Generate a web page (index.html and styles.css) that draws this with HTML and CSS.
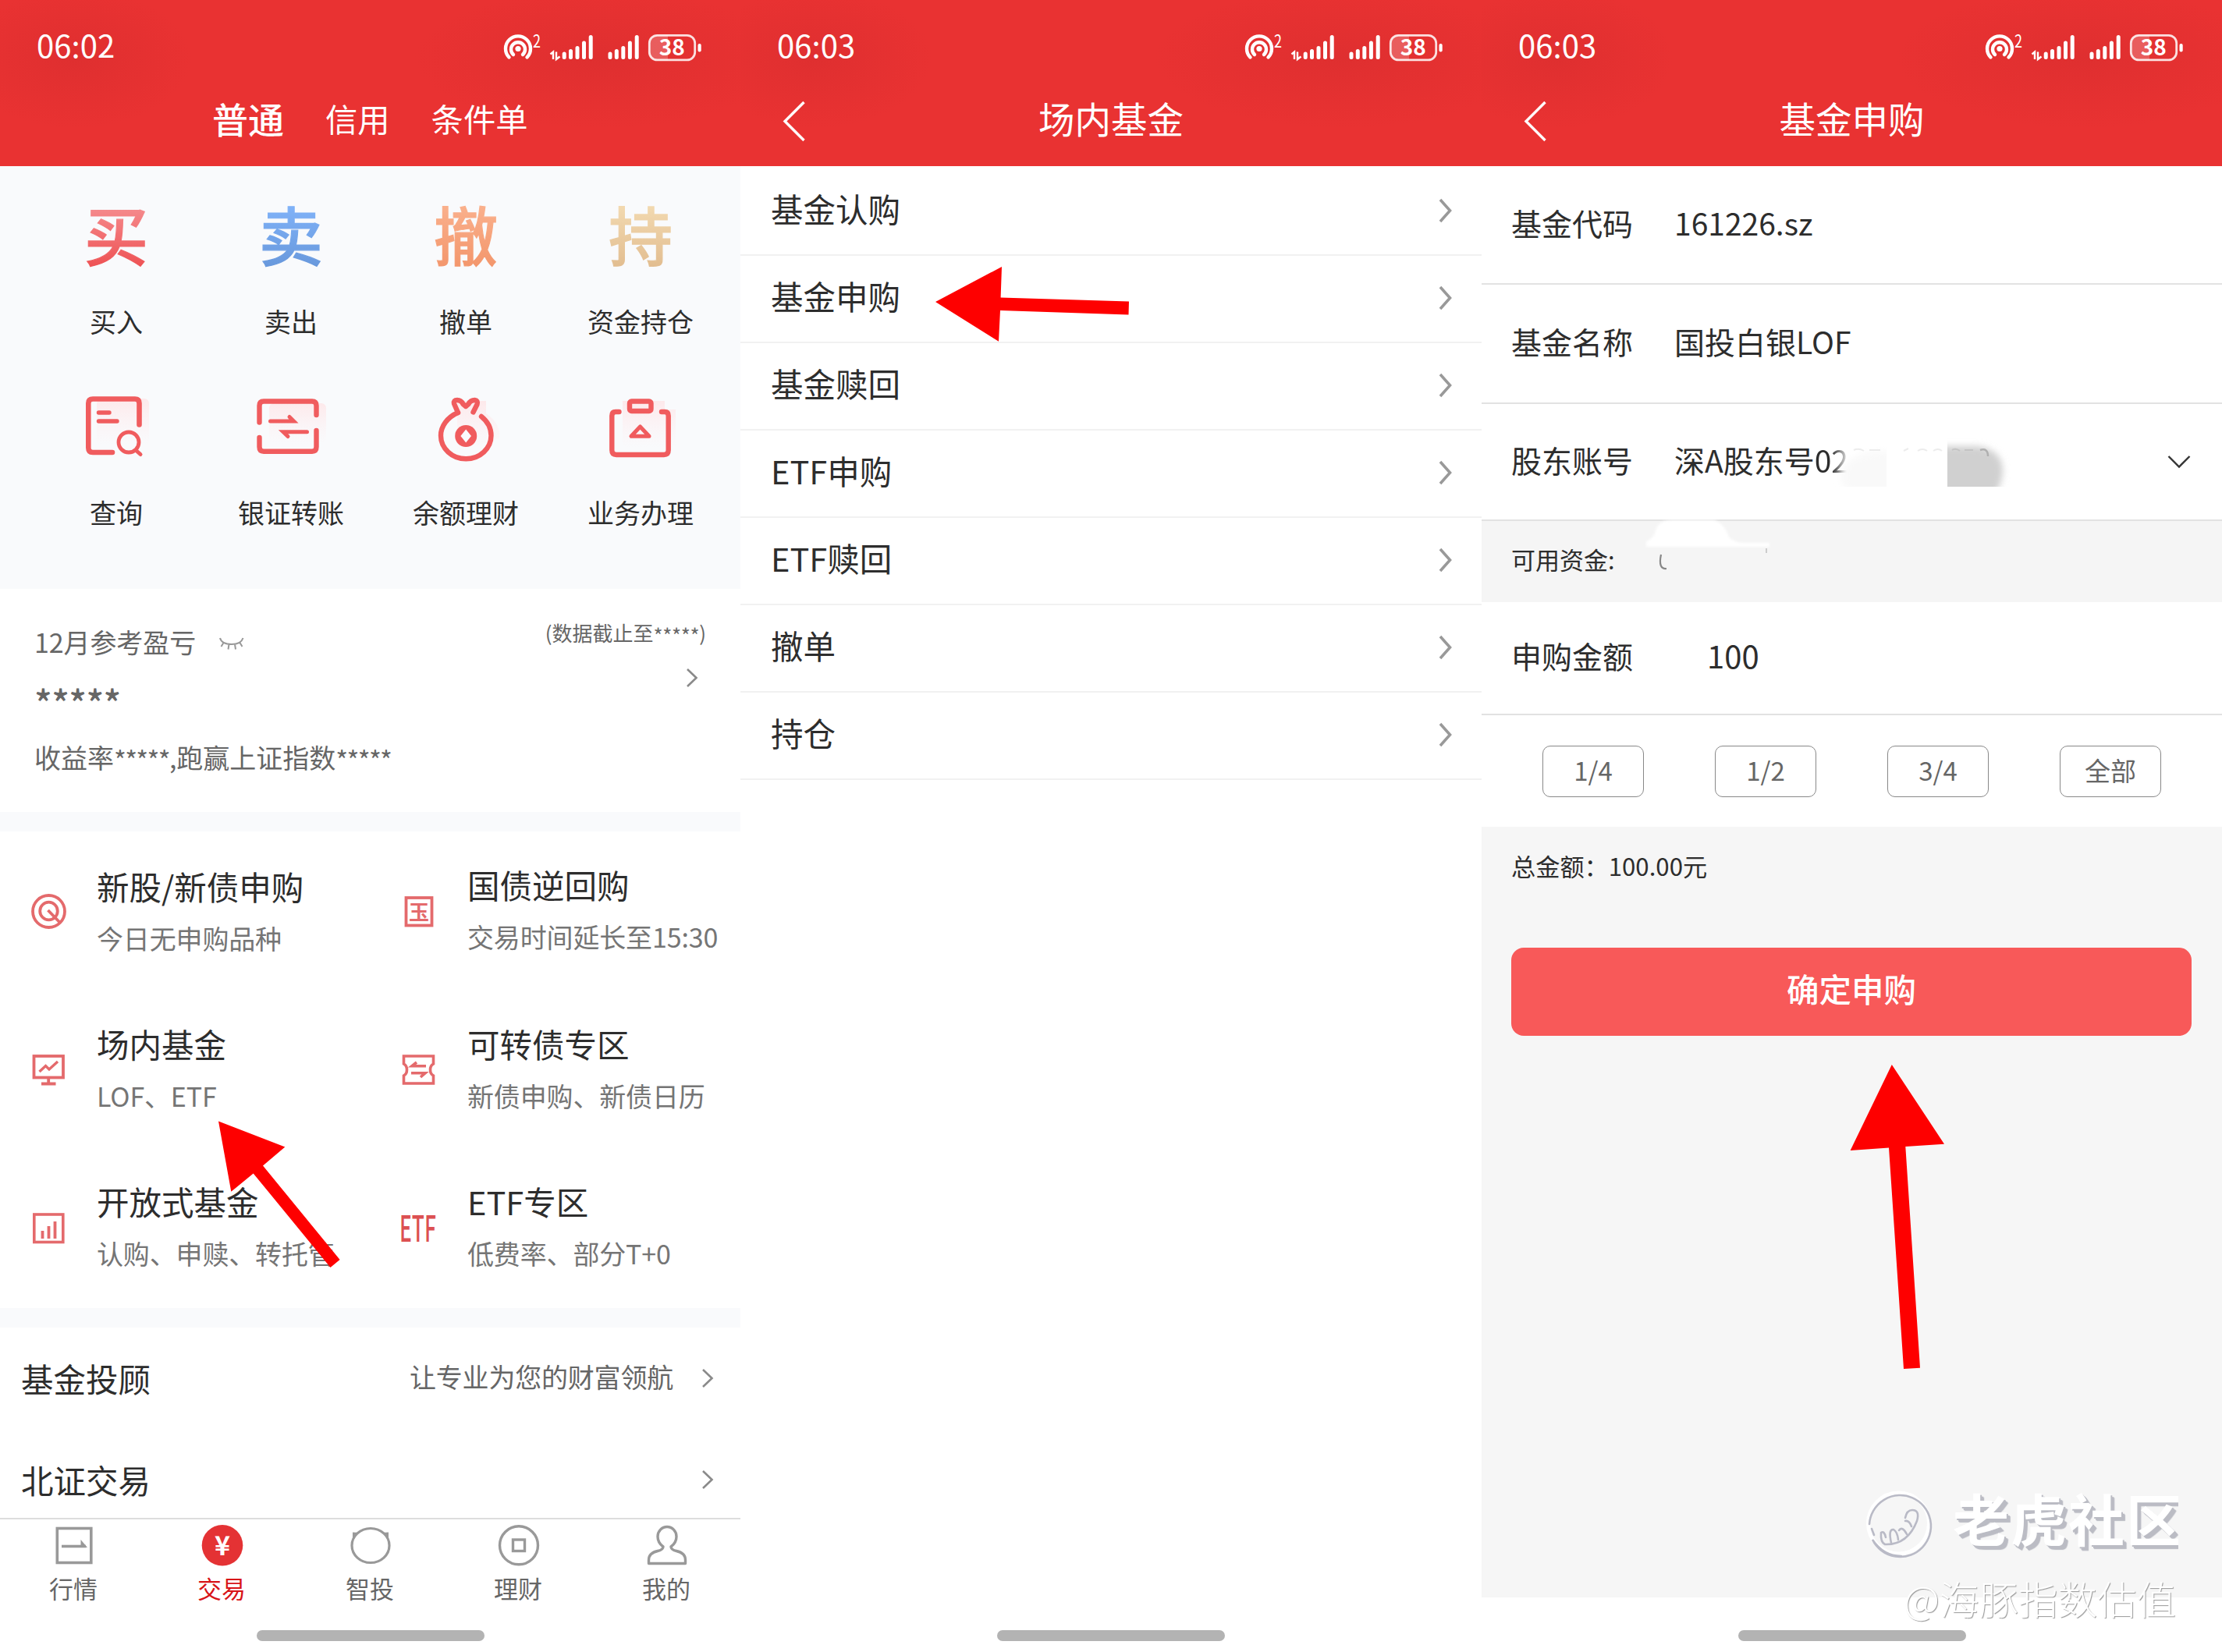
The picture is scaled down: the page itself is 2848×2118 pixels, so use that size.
FILE: index.html
```html
<!DOCTYPE html>
<html lang="zh-CN">
<head>
<meta charset="utf-8">
<title>场内基金申购</title>
<link rel="stylesheet" href="styles.css">
</head>
<body>
<svg class="defs" width="0" height="0">
  <symbol id="status" viewBox="640 30 270 60" overflow="visible">
    <g fill="none" stroke="#fff" stroke-width="4.4" stroke-linecap="round">
      <path d="M652.500 73.500A16 16 0 1 1 675.500 73.500"/>
      <path d="M658 70A9 9 0 1 1 670 70"/>
    </g>
    <circle cx="664" cy="62.500" r="3.600" fill="#fff"/>
    <text class="st-sup" x="683" y="61" textLength="10" lengthAdjust="spacingAndGlyphs">2</text>
    <path d="M705.500 69.500L709 66.500V76M713 66.500V76L717.500 72.500" fill="none" stroke="#fff" stroke-width="2.400"/>
    <g stroke="#fff" stroke-width="5" stroke-linecap="round">
      <path d="M723.200 69V73.500M731.500 65.500V73.500M740 61.500V73.500M748.500 55V73.500M757.200 47.500V73.500"/>
      <path d="M782 69V73.500M790.300 65.500V73.500M798.800 61.500V73.500M807.400 55V73.500M816.200 47.500V73.500"/>
    </g>
    <path d="M843 45H856V77.500H843A11 11 0 0 1 832 66.500V56A11 11 0 0 1 843 45Z" fill="#fff" opacity=".22"/>
    <rect x="832.300" y="45.300" width="58.400" height="31.600" rx="10" fill="none" stroke="#fff" stroke-opacity=".85" stroke-width="2.800"/>
    <rect x="894.500" y="56" width="4.200" height="10.500" rx="2" fill="#fff"/>
    <text class="st-bat" x="861.300" y="71.300" text-anchor="middle">38</text>
  </symbol>
  <symbol id="back" viewBox="0 0 40 60"><path d="M32.500 6L8 30.500L32.500 55" fill="none" stroke="#fff" stroke-width="3.400"/></symbol>
  <symbol id="go" viewBox="0 0 20 34"><path d="M3 3L15.500 17L3 31" fill="none" stroke="#999" stroke-width="3.600"/></symbol>
  <symbol id="go-s" viewBox="0 0 18 26"><path d="M3 2L14.500 13L3 24" fill="none" stroke="#8a8a8a" stroke-width="2.600"/></symbol>
  <linearGradient id="tint" x1="0" y1="0" x2="0" y2="1"><stop offset="0" stop-color="#fde9eb"/><stop offset="1" stop-color="#fdf1f3" stop-opacity="0"/></linearGradient>
</svg>

<main class="stage">
  <section class="phone">
    <header class="head">
      <div class="status"><span class="time">06:02</span><svg class="status-icons"><use href="#status"/></svg></div>
      <nav class="head-tabs"><b>普通</b><span>信用</span><span>条件单</span></nav>
    </header>

    <div class="shortcuts">
      <div class="cut"><span class="glyph g-red">买</span><span class="cut-label">买入</span></div>
      <div class="cut"><span class="glyph g-blue">卖</span><span class="cut-label">卖出</span></div>
      <div class="cut"><span class="glyph g-orange">撤</span><span class="cut-label">撤单</span></div>
      <div class="cut"><span class="glyph g-gold">持</span><span class="cut-label">资金持仓</span></div>
      <div class="cut">
        <svg class="cut-icon" viewBox="104 500 90 100">
          <rect x="124" y="511" width="67" height="60" rx="6" fill="url(#tint)"/>
          <g fill="none" stroke="#f05c5e" stroke-linecap="round">
            <path d="M178.500 544.500V517Q178.500 511.500 173 511.500H119Q113.300 511.500 113.300 517V574Q113.300 580 119 580H144" stroke-width="6.600"/>
            <path d="M126.500 529H140M126.500 540H150" stroke-width="5.400"/>
            <circle cx="165" cy="567" r="13" stroke-width="4.800"/><path d="M175 578L180 582.500" stroke-width="5"/>
          </g>
        </svg><span class="cut-label">查询</span></div>
      <div class="cut">
        <svg class="cut-icon" viewBox="328 500 90 100">
          <rect x="345" y="517" width="73" height="52" rx="6" fill="url(#tint)"/>
          <g fill="none" stroke="#f05c5e" stroke-width="6.400" stroke-linecap="round">
            <path d="M332.500 541.500V520Q332.500 514.500 338 514.500H400Q405.500 514.500 405.500 520V532"/>
            <path d="M332.500 561V573Q332.500 578.700 338 578.700H400Q405.500 578.700 405.500 573V552"/>
            <path d="M346.500 540H376.500L371 534.500M393.500 553.700H363L369 559.500" stroke-width="5"/>
          </g>
        </svg><span class="cut-label">银证转账</span></div>
      <div class="cut">
        <svg class="cut-icon" viewBox="552 500 90 100">
          <path d="M586 514H623V530Q642 543 640 562L586 580Z" fill="url(#tint)"/>
          <g fill="none" stroke="#f05c5e" stroke-width="6.400" stroke-linecap="round" stroke-linejoin="round">
            <path d="M587 529C573 535 565 547 565 558.500A32 29.500 0 0 0 629.500 558.500C629.500 549 624.500 540 617 534"/>
            <path d="M587 529L582 517.500Q581 513 586 513Q591 513 593.500 518L597 521L600.500 518Q603 513 608.500 513Q613 513.500 611.500 518.500L606.500 528.500"/>
          </g>
          <circle cx="597.200" cy="559" r="14" fill="#f05c5e"/><path d="M597.200 550.500L604 559L597.200 567.500L590.400 559Z" fill="#fafbfd"/>
        </svg><span class="cut-label">余额理财</span></div>
      <div class="cut">
        <svg class="cut-icon" viewBox="776 500 90 100">
          <path d="M798 514H852V525H866V574H798Z" fill="url(#tint)"/>
          <g fill="none" stroke="#f05c5e" stroke-width="6.400" stroke-linecap="round" stroke-linejoin="round">
            <path d="M793.500 528H789Q784.300 528 784.300 533V577Q784.300 583 790 583H851Q856.700 583 856.700 577V533Q856.700 528 852 528H848"/>
            <rect x="807" y="514.500" width="27.500" height="12.500" rx="2.500"/>
            <path d="M820.500 547L809 559.300H832Z" stroke-width="5"/>
          </g>
        </svg><span class="cut-label">业务办理</span></div>
    </div>

    <div class="profit">
      <div class="profit-main">
        <div class="profit-title">12月参考盈亏
          <svg class="lash" viewBox="278 814 38 22"><path d="M282 818Q284 826 297 826Q309 826 311.500 818M286.500 824L283.500 829M293.500 826L292.500 832.500M301 826L302 832.500M307.500 824L310.500 829" fill="none" stroke="#999" stroke-width="2"/></svg>
        </div>
        <div class="profit-value">*****</div>
        <div class="profit-rate">收益率<i class="mask">*****</i>,跑赢上证指数<i class="mask">*****</i></div>
      </div>
      <div class="profit-side">
        <span>(数据截止至<i class="mask mask--wide">*****</i>)</span>
        <svg class="profit-go"><use href="#go-s"/></svg>
      </div>
    </div>
    <div class="band"></div>

    <div class="entries">
      <div class="entry">
        <svg class="entry-icon" viewBox="38 1145 48 48"><g fill="none" stroke="#e46a6c" stroke-width="3.800"><circle cx="62.500" cy="1168.500" r="20.500"/><circle cx="62.500" cy="1168" r="11.300"/><path d="M61.500 1167L77 1183"/></g></svg>
        <div class="entry-text"><strong>新股/新债申购</strong><span>今日无申购品种</span></div></div>
      <div class="entry entry--raised">
        <svg class="entry-icon" viewBox="513 1143 48 48"><rect x="520.500" y="1151" width="33" height="35.500" fill="none" stroke="#e46a6c" stroke-width="3.800"/><text class="icon-jade" x="537" y="1178.500" text-anchor="middle">玉</text></svg>
        <div class="entry-text"><strong>国债逆回购</strong><span>交易时间延长至15:30</span></div></div>
      <div class="entry">
        <svg class="entry-icon" viewBox="38 1347 48 48"><g fill="none" stroke="#e46a6c" stroke-width="3.800"><rect x="43.500" y="1354" width="37.500" height="27.500"/><path d="M62.200 1381V1389M53 1389.500H71.500"/><path d="M50.500 1374L58.500 1366.500L63 1371L74 1361" stroke-width="3.400"/></g></svg>
        <div class="entry-text"><strong>场内基金</strong><span>LOF、ETF</span></div></div>
      <div class="entry">
        <svg class="entry-icon" viewBox="513 1347 48 48"><g fill="none" stroke="#e46a6c" stroke-width="3.600"><path d="M517.500 1354H555.500V1364Q551.500 1366 551.500 1371.500Q551.500 1377 555.500 1379V1389H517.500V1379Q521.500 1377 521.500 1371.500Q521.500 1366 517.500 1364Z"/><path d="M546 1366.800H528L534 1362M527 1375.800H545L539 1381"/></g></svg>
        <div class="entry-text"><strong>可转债专区</strong><span>新债申购、新债日历</span></div></div>
      <div class="entry">
        <svg class="entry-icon" viewBox="38 1549 48 48"><g fill="none" stroke="#e46a6c" stroke-width="3.600"><rect x="43.800" y="1557" width="37" height="35.500"/><path d="M54.500 1578V1588M62.500 1572V1588M70.500 1566V1588" stroke-width="3.800"/></g></svg>
        <div class="entry-text"><strong>开放式基金</strong><span>认购、申赎、转托管</span></div></div>
      <div class="entry">
        <svg class="entry-icon" viewBox="513 1549 48 48"><text class="icon-etf" x="512" y="1592" textLength="47" lengthAdjust="spacingAndGlyphs">ETF</text></svg>
        <div class="entry-text"><strong>ETF专区</strong><span>低费率、部分T+0</span></div></div>
    </div>
    <div class="band"></div>

    <div class="links">
      <div class="link"><strong>基金投顾</strong><span class="link-note">让专业为您的财富领航</span><svg class="link-go"><use href="#go-s"/></svg></div>
      <div class="link"><strong>北证交易</strong><span class="link-note"></span><svg class="link-go"><use href="#go-s"/></svg></div>
    </div>

    <nav class="tabbar">
      <div class="tab"><svg viewBox="65 1950 60 60"><g fill="none" stroke="#999" stroke-width="3.600"><rect x="73.300" y="1959.500" width="43.500" height="44"/><path d="M79 1982.500H110"/></g><path d="M103.500 1974L112 1984H103.500Z" fill="#999"/></svg><span>行情</span></div>
      <div class="tab tab--on"><svg viewBox="255 1950 60 60"><circle cx="285" cy="1981.300" r="26.300" fill="#e43234"/><text class="yen" x="285" y="1993.500" text-anchor="middle">¥</text></svg><span>交易</span></div>
      <div class="tab"><svg viewBox="445 1950 60 60"><ellipse cx="475" cy="1981.500" rx="24" ry="22" fill="none" stroke="#999" stroke-width="3.200"/><path d="M452 1972V1964.500L461 1965ZM498 1972V1964.500L489 1965Z" fill="#999"/></svg><span>智投</span></div>
      <div class="tab"><svg viewBox="635 1950 60 60"><g fill="none" stroke="#999" stroke-width="3.400"><circle cx="665" cy="1981.300" r="24.500"/><rect x="657.500" y="1974" width="15" height="14.500"/></g></svg><span>理财</span></div>
      <div class="tab"><svg viewBox="825 1950 60 60"><path d="M831.500 2004.500V2000Q831.500 1991 843 1988.500Q850 1987 850 1983Q843 1978 843 1970A12 12.500 0 0 1 867 1970Q867 1978 860 1983Q860 1987 867 1988.500Q878.500 1991 878.500 2000V2004.500Z" fill="none" stroke="#999" stroke-width="3.400" stroke-linejoin="round"/></svg><span>我的</span></div>
    </nav>
    <div class="home"></div>
  </section>

  <section class="phone">
    <header class="head">
      <div class="status"><span class="time">06:03</span><svg class="status-icons"><use href="#status"/></svg></div>
      <div class="title"><svg class="back"><use href="#back"/></svg><h1>场内基金</h1></div>
    </header>
    <ul class="menu">
      <li>基金认购<svg><use href="#go"/></svg></li>
      <li>基金申购<svg><use href="#go"/></svg></li>
      <li>基金赎回<svg><use href="#go"/></svg></li>
      <li>ETF申购<svg><use href="#go"/></svg></li>
      <li>ETF赎回<svg><use href="#go"/></svg></li>
      <li>撤单<svg><use href="#go"/></svg></li>
      <li>持仓<svg><use href="#go"/></svg></li>
    </ul>
    <div class="home"></div>
  </section>

  <section class="phone">
    <header class="head">
      <div class="status"><span class="time">06:03</span><svg class="status-icons"><use href="#status"/></svg></div>
      <div class="title"><svg class="back"><use href="#back"/></svg><h1>基金申购</h1></div>
    </header>
    <div class="field field--first"><label>基金代码</label><span>161226.sz</span></div>
    <div class="field"><label>基金名称</label><span>国投白银LOF</span></div>
    <div class="field field--account"><label>股东账号</label><span>深A股东号<i class="fade">02</i></span>
      <svg class="down" viewBox="0 0 34 34"><path d="M3.500 10L17 23.500L30.500 10" fill="none" stroke="#333" stroke-width="2.400"/></svg>
      <svg class="smudge" viewBox="2340 560 240 70">
        <defs>
          <filter id="soft" x="-30%" y="-30%" width="160%" height="160%"><feGaussianBlur stdDeviation="4"/></filter>
          <clipPath id="cut-a"><rect x="2340" y="560" width="78" height="64"/></clipPath>
          <clipPath id="cut-b"><rect x="2496" y="560" width="84" height="64"/></clipPath>
        </defs>
        <g clip-path="url(#cut-a)"><ellipse cx="2412" cy="612" rx="52" ry="34" fill="#f9f9f9" filter="url(#soft)"/></g>
        <g clip-path="url(#cut-b)"><path d="M2470 572H2534Q2568 576 2567 606Q2566 622 2553 640H2470Z" fill="#d0d0d0" filter="url(#soft)"/></g>
        <path d="M2376 577Q2382 574 2389 578M2396 577H2410M2440 578L2446 575M2458 578Q2464 574 2470 578M2478 578Q2484 574 2489 578" fill="none" stroke="#ececec" stroke-width="2"/>
        <path d="M2502 577Q2507 574 2512 578M2518 577H2529" fill="none" stroke="#c4c4c4" stroke-width="2"/>
        <path d="M2538 577Q2548 574 2548 585" fill="none" stroke="#b0b0b0" stroke-width="2.500"/>
      </svg>
    </div>
    <div class="funds">可用资金:
      <svg class="smear" viewBox="2100 664 190 90">
        <path d="M2108 701V694Q2118 690 2120 680Q2124 667 2140 667H2196Q2208 672 2213 686Q2216 694 2232 696H2266V701Z" fill="#fff" filter="url(#soft2)"/>
        <filter id="soft2"><feGaussianBlur stdDeviation="1.800"/></filter>
        <path d="M2127 711Q2123 730 2134 729" fill="none" stroke="#888" stroke-width="2.200"/>
        <path d="M2262 703V709" stroke="#ccc" stroke-width="2"/>
      </svg>
    </div>
    <div class="field field--amount"><label>申购金额</label><span>100</span></div>
    <div class="shares"><button>1/4</button><button>1/2</button><button>3/4</button><button>全部</button></div>
    <div class="confirm">
      <p>总金额：100.00元</p>
      <button class="submit">确定申购</button>
    </div>
    <div class="home"></div>
    <div class="watermark">
      <div class="wm-brand">
        <svg viewBox="2389 1908 92 92">
          <g fill="none" stroke="#fff" stroke-width="5"><circle cx="2433.500" cy="1953" r="39"/></g>
          <g fill="none" stroke="#b9bac6" stroke-width="2.600" stroke-linecap="round">
            <path d="M2396 1954A39.500 39.500 0 1 1 2400 1974Q2414 1995 2437 1995" />
            <path d="M2399 1960L2402 1968M2411 1965Q2410 1977 2416 1980Q2445 1981 2457 1950Q2461 1936 2451 1936Q2444 1936 2442 1946M2411 1965Q2415 1962 2417 1971M2424 1978Q2420 1960 2427 1961Q2432 1964 2433 1974M2434 1962Q2438 1956 2444 1967M2442 1950Q2447 1949 2450 1957"/>
          </g>
        </svg>
        <span>老虎社区</span>
      </div>
      <div class="wm-user">@海豚指数估值</div>
    </div>
  </section>

  <svg class="arrows" viewBox="0 0 2848 2118">
    <path d="M280 1437.600L365.300 1470.400L337 1494.500L435.600 1615L423.500 1625L324.700 1504.400L296.300 1527.800Z"/>
    <path d="M1199 387L1284 342L1282.600 381.400L1447 386.400L1446.500 403.500L1282 398L1280 437.700Z"/>
    <path d="M2424.800 1365L2492 1466.800L2442.300 1470L2461 1753.800L2440 1755L2421 1471.400L2371.600 1475Z"/>
  </svg>
</main>
</body>
</html>
```

FILE: styles.css
```css
* { box-sizing: border-box; }
body { margin: 0; background: #fff; color: #2d2d2d; font-family: "Noto Sans CJK SC", "Noto Sans", sans-serif; }
svg { display: block; flex: none; overflow: visible; }
i { font-style: normal; }
.defs { position: absolute; }
.stage { position: relative; display: grid; grid-template-columns: 949px 950px 949px; width: 2848px; height: 2118px; overflow: hidden; }
.phone { position: relative; display: flex; flex-direction: column; height: 2118px; background: #fff; overflow: hidden; }

/* header */
.head { height: 213px; flex: none; color: #fff; background:
  radial-gradient(ellipse 150px 90px at 96px 75px, rgba(200, 40, 42, .3), rgba(200, 40, 42, 0)),
  radial-gradient(ellipse 240px 90px at 770px 75px, rgba(200, 40, 42, .3), rgba(200, 40, 42, 0)), #e93232; }
.status { display: flex; justify-content: space-between; height: 119px; padding: 30px 39px 0 47px; }
.time { font-size: 40px; line-height: 54px; letter-spacing: .1px; font-weight: 400; }
.status-icons { width: 270px; height: 60px; }
.st-sup { font-size: 23px; fill: #fff; }
.st-bat { font: 700 28px "Noto Sans CJK SC", sans-serif; fill: #fff; }
.head-tabs { display: flex; gap: 53px; padding-left: 272px; font-size: 41.300px; line-height: 64px; }
.head-tabs b { font-size: 46px; font-weight: 500; }
.title { display: grid; grid-template-columns: 160px 1fr 160px; }
.title h1 { margin: 0; text-align: center; font-size: 46.500px; font-weight: 400; line-height: 63px; }
.back { width: 40px; height: 60px; margin: 6px 0 0 49px; }

/* shortcuts */
.shortcuts { display: grid; grid-template-columns: repeat(4, 224px); align-content: start; padding-left: 37px; height: 542px; flex: none; background: #f9fafc; }
.cut { display: flex; flex-direction: column; align-items: center; }
.glyph { font-size: 82px; line-height: 172px; font-weight: 500; color: transparent; -webkit-text-stroke: 1.200px transparent; -webkit-background-clip: text; background-clip: text; }
.g-red { background-image: linear-gradient(#f58c8e 30%, #ee5254 75%); }
.g-blue { background-image: linear-gradient(#80b2f8 30%, #6898dc 75%); }
.g-orange { background-image: linear-gradient(#fab08c 30%, #f3966c 75%); }
.g-gold { background-image: linear-gradient(#f2d9b0 30%, #e2bd90 75%); }
.cut-label { font-size: 34px; line-height: 53px; }
.cut-icon { width: 90px; height: 100px; margin: 62px 0 30px; }

/* profit */
.profit { display: flex; justify-content: space-between; height: 286px; flex: none; padding: 40px 44px 0 44px; color: #666; }
.profit-title { display: flex; align-items: center; gap: 27px; height: 54px; font-size: 34px; letter-spacing: -.1px; }
.lash { width: 38px; height: 22px; margin-top: 5px; }
.profit-value { font-size: 47px; font-weight: 500; line-height: 102px; letter-spacing: -.6px; }
.profit-rate { font-size: 34px; line-height: 40px; }
.mask { display: inline-block; line-height: 1; letter-spacing: -.05em; vertical-align: -.1em; }
.mask--wide { letter-spacing: -.015em; }
.profit-side { display: flex; flex-direction: column; align-items: flex-end; font-size: 26px; line-height: 32px; }
.profit-go { width: 18px; height: 26px; margin: 29px 9.500px 0 0; }
.band { height: 25px; flex: none; background: #f9fafc; }

/* entries */
.entries { display: grid; grid-template-columns: 475px 474px; grid-auto-rows: 202px; height: 611px; flex: none; }
.entry { display: flex; gap: 38px; padding-left: 38px; white-space: nowrap; }
.entry-icon { width: 48px; height: 48px; margin-top: 79px; }
.entry-text { display: flex; flex-direction: column; padding-top: 45px; }
.entry-text strong { font-size: 41.500px; font-weight: 400; line-height: 50px; }
.entry-text span { font-size: 34px; line-height: 84px; color: #757575; letter-spacing: -.15px; }
.entry--raised { margin-top: -2px; }
.icon-jade { font-size: 26px; font-weight: 700; fill: #e46a6c; }
.icon-etf { font: 500 46px "Noto Sans CJK SC", sans-serif; fill: #dc5052; }

/* links */
.links { height: 244px; flex: none; overflow: hidden; }
.link { display: flex; align-items: center; height: 130px; padding: 0 33px 0 27px; }
.link strong { font-size: 41.500px; font-weight: 400; line-height: 130px; flex: 1; }
.link-note { font-size: 34px; line-height: 60px; color: #666; padding-bottom: 4px; letter-spacing: -.2px; }
.link-go { width: 18px; height: 26px; margin-left: 35px; }

/* bottom */
.tabbar { display: grid; grid-template-columns: repeat(5, 190px); height: 130px; flex: none; border-top: 2px solid #ddd; }
.tab { display: flex; flex-direction: column; align-items: center; padding-top: 2px; font-size: 31px; line-height: 51px; color: #666; }
.tab span { padding-right: 2px; }
.tab svg { width: 60px; height: 60px; }
.tab--on { color: #d81418; }
.yen { font-size: 34px; font-weight: 700; fill: #fff; }
.home { width: 292px; height: 14px; margin: auto auto 14px; flex: none; border-radius: 7px; background: #b3b3b3; }

/* menu */
.menu { margin: 0; padding: 3px 0 0; list-style: none; }
.menu li { display: flex; justify-content: space-between; align-items: center; height: 112px; padding: 0 36px 9px 39px; border-bottom: 2px solid #f1f1f1; font-size: 41.500px; }
.menu svg { width: 20px; height: 34px; margin-top: 7px; }

/* form */
.field { position: relative; display: flex; align-items: center; flex: none; height: 153px; padding: 0 0 7px 38px; border-bottom: 2px solid #e2e2e2; font-size: 39px; }
.field label { width: 209px; }
.field--first { height: 152px; }
.field--account { height: 150px; }
.field--amount { height: 145px; }
.field--amount label { width: 251px; }
.field--amount span { font-size: 40px; }
.fade { color: transparent; background: linear-gradient(90deg, #2d2d2d 50%, #bbb 88%, #fff); -webkit-background-clip: text; background-clip: text; }
.down { width: 34px; height: 34px; margin: 6px 38px 0 auto; }
.smudge { position: absolute; left: 441px; top: 42px; width: 240px; height: 70px; }
.funds { position: relative; height: 104px; flex: none; padding-left: 38px; background: #f5f5f5; font-size: 31px; line-height: 98px; }
.smear { position: absolute; left: 203px; top: -4px; width: 190px; height: 90px; }
.shares { display: flex; gap: 91px; height: 143px; flex: none; padding: 39px 0 0 78px; }
.shares button { width: 130px; height: 66px; padding: 0 0 4px; border: 1.500px solid #888; border-radius: 10px; background: #fff; color: #666; font: 400 33px "Noto Sans CJK SC", sans-serif; }
.confirm { height: 988px; flex: none; padding: 25px 39px 0 38px; background: #f6f6f6; }
.confirm p { margin: 0; font-size: 31.200px; line-height: 50px; }
.submit { display: block; width: 872px; height: 113px; margin-top: 80px; padding: 0 0 10px; border: 0; border-radius: 16px; background: #f85959; color: #fff; font: 500 41.500px "Noto Sans CJK SC", sans-serif; }

/* overlays */
.watermark { position: absolute; left: 490px; top: 1908px; width: 403px; overflow: hidden; color: #fff; }
.wm-brand { display: flex; height: 92px; }
.wm-brand svg { width: 92px; height: 92px; }
.wm-brand span { margin-left: 22px; font-size: 72px; font-weight: 700; line-height: 74px; letter-spacing: 2px; white-space: nowrap; text-shadow: 2px 2px 0 #bbbcc4, 4px 4px 0 #bbbcc4, 5px 5px 1px #bbbcc4; }
.wm-user { padding-left: 51px; font-size: 50.500px; font-weight: 300; line-height: 97px; white-space: nowrap; text-shadow: 1px 1px 1px #999; }
.arrows { position: absolute; left: 0; top: 0; width: 2848px; height: 2118px; fill: #fe0000; pointer-events: none; }
```
